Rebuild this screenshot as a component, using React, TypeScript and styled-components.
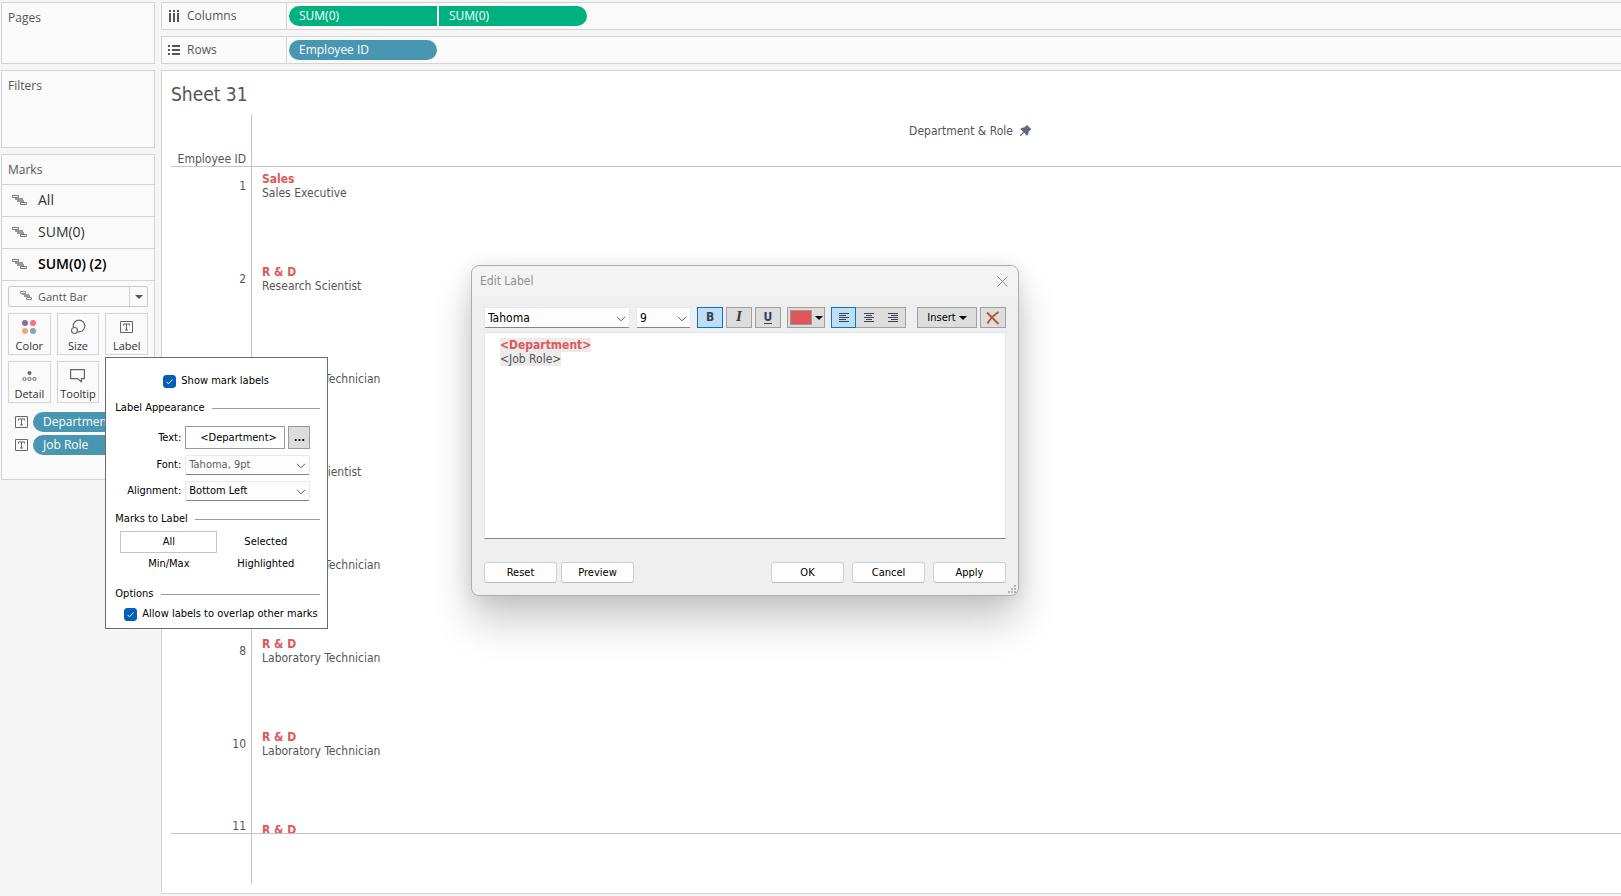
import React from 'react';
import styled, { createGlobalStyle, css } from 'styled-components';
import { AiFillPushpin } from 'react-icons/ai';

const uiFont = '"DejaVu Sans Condensed", Tahoma, sans-serif';
const panelFont = '"Open Sans", "Noto Sans", sans-serif';
const line = '#d4d4d4';
const blue = '#4996b2';
const green = '#00b180';
const red = '#e15759';

const GlobalStyle = createGlobalStyle`
  *, *::before, *::after { box-sizing: border-box; }
  body { margin: 0; background: #f5f5f5; color: #555; font: 12px/14px ${panelFont}; }
  button, input, select { margin: 0; padding: 0; border: 0; background: none; color: inherit; font: inherit; }
  h1, h2, h3, p { margin: 0; font: inherit; }
`;

/* ---------- page frame ---------- */

const Page = styled.div`
  position: relative;
  display: grid;
  grid-template-columns: 154px minmax(0, 1fr);
  grid-template-rows: minmax(0, 1fr);
  gap: 6px;
  height: 100vh;
  padding: 2px 0 2px 1px;
  overflow: hidden;
`;

const Side = styled.aside`
  display: flex;
  flex-direction: column;
  align-items: stretch;
  gap: 6px;
`;

const Main = styled.main`
  display: flex;
  flex-direction: column;
  gap: 6px;
  min-width: 0;
`;

const Card = styled.section<{ $height?: number }>`
  min-height: ${(p) => p.$height ?? 0}px;
  border: 1px solid ${line};
  background: #fafafa;
`;

const CardTitle = styled.h2`
  padding: 8px 6px;
  line-height: 13px;
`;

/* ---------- shelves ---------- */

const Shelf = styled.section`
  display: flex;
  height: 28px;
  flex: none;
  border: 1px solid ${line};
  border-right: 0;
  background: #fafafa;
`;

const ShelfName = styled.h2`
  display: flex;
  align-items: center;
  gap: 7px;
  width: 125px;
  padding-left: 6px;
  border-right: 1px solid ${line};
`;

const Pills = styled.div`
  display: flex;
  align-items: center;
  gap: 2px;
  padding-left: 2px;
`;

type End = 'both' | 'left' | 'right';

const Pill = styled.button<{ $color: string; $round?: End }>`
  width: 148px;
  height: 20px;
  padding-left: 10px;
  background: ${(p) => p.$color};
  color: #fff;
  text-align: left;
  border-radius: ${(p) =>
    p.$round === 'left' ? '10px 0 0 10px' : p.$round === 'right' ? '0 10px 10px 0' : '10px'};
`;

/* ---------- marks card ---------- */

const MarksCard = styled(Card)`
  padding-bottom: 24px;
`;

const MarkTab = styled.button<{ $active?: boolean }>`
  display: flex;
  align-items: center;
  gap: 11px;
  width: 100%;
  height: 32px;
  padding: 0 0 2px 10px;
  border-top: 1px solid ${line};
  color: ${(p) => (p.$active ? '#000' : '#333')};
  font-size: 14px;
  font-weight: ${(p) => (p.$active ? 600 : 400)};
`;

const MarksBody = styled.div`
  padding: 5px 6px 0;
  border-top: 1px solid ${line};
`;

const MarkType = styled.label`
  position: relative;
  display: block;
  height: 21px;
  margin-bottom: 6px;
  border: 1px solid #c8c8c8;
  border-radius: 2px;
  font-size: 11px;

  select {
    width: 100%;
    height: 19px;
    padding-left: 29px;
    appearance: none;
  }
`;

const MarkTypeIcon = styled.span`
  position: absolute;
  left: 11px;
  top: 4px;
  display: flex;
  pointer-events: none;
`;

const MarkTypeArrow = styled.span`
  position: absolute;
  right: 0;
  top: 0;
  display: flex;
  align-items: center;
  justify-content: center;
  width: 18px;
  height: 19px;
  border-left: 1px solid ${line};
  pointer-events: none;
`;

const MarkButtons = styled.div`
  display: grid;
  grid-template-columns: repeat(3, 1fr);
  gap: 6px;
  margin-bottom: 9px;
`;

const MarkSlot = styled.div`
  position: relative;
`;

const MarkButton = styled.button`
  display: flex;
  flex-direction: column;
  align-items: center;
  justify-content: space-between;
  width: 100%;
  height: 42px;
  padding: 5px 0 1px;
  border: 1px solid ${line};
  color: #333;
  font-size: 11px;
  white-space: nowrap;
`;

const MarkPills = styled.ul`
  display: flex;
  flex-direction: column;
  gap: 3px;
  margin: 0;
  padding: 0 0 0 7px;
  list-style: none;

  li {
    display: flex;
    align-items: center;
    gap: 5px;
  }
`;

const MarkPill = styled(Pill)`
  flex: 1;
`;

/* ---------- worksheet ---------- */

const Sheet = styled.section`
  display: flex;
  flex: 1;
  flex-direction: column;
  min-height: 0;
  padding: 11px 0 9px 9px;
  border: 1px solid ${line};
  border-right: 0;
  background: #fff;
  font-family: ${uiFont};
`;

const SheetTitle = styled.h1`
  margin-bottom: 9px;
  font-size: 19px;
  line-height: 24px;
`;

const Viewport = styled.div`
  flex: 1;
  min-height: 0;
  overflow: hidden;
`;

const Table = styled.table`
  width: 100%;
  border-collapse: separate;
  border-spacing: 0;
  table-layout: fixed;

  th, td { padding: 0; font-weight: 400; vertical-align: top; }
`;

const IdHead = styled.th`
  width: 81px;
  height: 52px;
  border-right: 1px solid #c4c4c4;
  border-bottom: 1px solid #c4c4c4;

  && { padding-right: 5px; text-align: right; vertical-align: bottom; }
`;

const RoleHead = styled.th`
  border-bottom: 1px solid #c4c4c4;

  && { padding: 8px 0 0 69px; }

  svg { margin-left: 5px; color: #5f6b7e; vertical-align: -3px; }
`;

const DataRow = styled.tr`
  height: 93px;
`;

const IdCell = styled.th<{ $cut: boolean }>`
  border-right: 1px solid #c4c4c4;

  && { padding: ${(p) => (p.$cut ? 1 : 12)}px 5px 0 0; text-align: right; }
`;

const LabelCell = styled.td`
  && { padding: 5px 0 0 10px; }
`;

const Dept = styled.strong`
  display: block;
  color: ${red};
`;

const Axis = styled.div`
  flex: none;
  height: 51px;
  border-top: 1px solid #c4c4c4;

  &::before {
    content: '';
    display: block;
    width: 81px;
    height: 50px;
    border-right: 1px solid #c4c4c4;
  }
`;

/* ---------- label popup ---------- */

const Popup = styled.section`
  position: absolute;
  z-index: 2;
  left: 0;
  top: 44px;
  width: 223px;
  padding: 16px 7px 7px 9px;
  border: 1px solid #6b6b6b;
  background: #fff;
  color: #000;
  font: 11px/14px ${uiFont};
`;

const Check = styled.label<{ $indent: number }>`
  display: flex;
  align-items: center;
  gap: 5px;
  padding-left: ${(p) => p.$indent}px;
  white-space: nowrap;
`;

const CheckBox = styled.span`
  display: grid;
  width: 13px;
  height: 13px;

  input {
    grid-area: 1 / 1;
    width: 13px;
    height: 13px;
    appearance: none;
    border: 1px solid #777;
    border-radius: 3px;
  }
  input:checked { border-color: #005fb8; background: #005fb8; }
  svg { grid-area: 1 / 1; pointer-events: none; }
`;

const GroupTitle = styled.h3<{ $above: number; $below: number }>`
  display: flex;
  align-items: center;
  gap: 7px;
  margin: ${(p) => p.$above}px 0 ${(p) => p.$below}px;

  &::after { content: ''; flex: 1; height: 1px; background: #9a9a9a; }
`;

const Fields = styled.div`
  display: grid;
  grid-template-columns: 66px 125px;
  gap: 6px 4px;
  align-items: center;

  > label { text-align: right; }
`;

const TextField = styled.div`
  display: flex;
  gap: 3px;

  input {
    width: 100px;
    height: 23px;
    padding-left: 14px;
    border: 1px solid #999;
  }
  button {
    flex: 1;
    border: 1px solid #999;
    background: #ddd;
    font-weight: 700;
  }
`;

const Combo = styled.span<{ $width: number; $height: number; $muted?: boolean; $size?: number }>`
  position: relative;
  display: block;
  width: ${(p) => p.$width}px;
  height: ${(p) => p.$height}px;
  border: 1px solid #e8e8e8;
  border-bottom-color: #868686;
  border-radius: 2px;
  background: #fdfdfd;
  color: ${(p) => (p.$muted ? '#5c5c5c' : '#000')};
  font-size: ${(p) => p.$size ?? 11}px;

  select {
    width: 100%;
    height: 100%;
    padding-left: 3px;
    appearance: none;
  }
  svg { position: absolute; right: 3px; top: 50%; margin-top: -2px; pointer-events: none; }
`;

const Choices = styled.div`
  display: grid;
  grid-template-columns: 97px 97px;
  padding-left: 5px;
`;

const Choice = styled.button`
  height: 22px;
  border: 1px solid transparent;

  &[aria-pressed='true'] { border-color: #c4c4c4; }
`;

/* ---------- edit label dialog ---------- */

const Dialog = styled.section`
  position: absolute;
  z-index: 3;
  left: 471px;
  top: 265px;
  width: 548px;
  border: 1px solid #adadad;
  border-radius: 8px;
  background: #efefef;
  box-shadow: 0 26px 40px rgba(0, 0, 0, 0.2), 0 2px 20px rgba(0, 0, 0, 0.1);
  color: #000;
  font: 11px/14px ${uiFont};
`;

const TitleBar = styled.header`
  display: flex;
  align-items: center;
  justify-content: space-between;
  height: 30px;
  padding: 0 10px 0 8px;
  border-radius: 8px 8px 0 0;
  background: #f3f3f3;
  color: #8f8f8f;
  font-size: 12px;

  button { display: flex; }
`;

const DialogBody = styled.div`
  padding: 11px 12px 12px;
`;

const Tools = styled.div`
  display: flex;
  align-items: center;
  gap: 6px;
  margin-bottom: 4px;
`;

const ToolGroup = styled.div<{ $end?: boolean; $joined?: boolean }>`
  display: flex;
  gap: ${(p) => (p.$joined ? 0 : 3)}px;
  margin-left: ${(p) => (p.$end ? 'auto' : 0)};
`;

const Tool = styled.button<{ $width: number; $mid?: boolean; $last?: boolean }>`
  display: flex;
  align-items: center;
  justify-content: center;
  gap: 3px;
  width: ${(p) => p.$width}px;
  height: 21px;
  border: 1px solid #a0a0a0;
  background: #ddd;
  ${(p) => p.$mid && css`border-left: 0; border-right: 0;`}
  ${(p) => p.$last && css`border-left: 0;`}

  &[aria-pressed='true'] { border-color: #0078d7; background: #c0ddf5; }
`;

const Glyph = styled.span<{ $kind: 'bold' | 'italic' | 'underline' }>`
  color: #35424f;
  font-weight: 700;
  font-size: 12px;
  line-height: 13px;
  ${(p) => p.$kind === 'italic' && css`font-family: "DejaVu Serif", serif; font-style: italic;`}
  ${(p) => p.$kind === 'underline' && css`border-bottom: 1px solid #35424f; line-height: 12px;`}
`;

const Swatch = styled.span`
  width: 22px;
  height: 15px;
  border: 1px solid #999;
  background: ${red};
`;

const Editor = styled.div`
  height: 207px;
  margin-bottom: 23px;
  padding: 5px 15px;
  border: 1px solid #e6e6e6;
  border-bottom-color: #868686;
  background: #fff;
  color: #555;
  font-size: 12px;
  outline: 0;

  strong { color: ${red}; }
  strong, span { background: #ebebeb; }
`;

const Actions = styled.footer`
  display: flex;
  gap: 8px;
`;

const ActionPair = styled.div`
  display: flex;
  gap: 4px;
  margin-right: auto;
`;

const Action = styled.button`
  width: 73px;
  height: 21px;
  border: 1px solid #d0d0d0;
  border-bottom-color: #bababa;
  border-radius: 3px;
  background: #fdfdfd;
`;

const Grip = styled.svg`
  position: absolute;
  right: 2px;
  bottom: 2px;
`;

/* ---------- icons ---------- */

const ColumnsIcon = () => (
  <svg width="12" height="13" viewBox="0 0 12 13" fill="#555" aria-hidden="true">
    <path d="M1 0h2v2H1zM5 0h2v2H5zM9 0h2v2H9zM1 3h2v9H1zM5 3h2v9H5zM9 3h2v9H9z" />
  </svg>
);

const RowsIcon = () => (
  <svg width="12" height="13" viewBox="0 0 12 13" fill="#555" aria-hidden="true">
    <path d="M0 1h2v2H0zM0 5h2v2H0zM0 9h2v2H0zM4 1h8v2H4zM4 5h8v2H4zM4 9h8v2H4z" />
  </svg>
);

const GanttIcon = () => (
  <svg width="15" height="10" viewBox="0 0 15 10" aria-hidden="true">
    <path d="M.5.5h6v2h-6zM8.500 7.500h6v2h-6z" fill="#fafafa" stroke="#777" />
    <path d="M3 3h8v2H3zM5 5h7v2H5z" fill="#999" />
  </svg>
);

const SmallGanttIcon = () => (
  <svg width="12" height="9" viewBox="0 0 12 9" aria-hidden="true">
    <path d="M.5.5h5v2h-5zM6.500 6.500h5v2h-5z" fill="#fafafa" stroke="#888" />
    <path d="M2 3h7v1H2zM4 4h6v2H4z" fill="#999" />
  </svg>
);

const ColorIcon = () => (
  <svg width="16" height="16" viewBox="0 0 16 16" aria-hidden="true">
    <circle cx="4" cy="4" r="3" fill="#8a6f9e" />
    <circle cx="12" cy="4" r="3" fill="#fb7080" />
    <circle cx="4" cy="12" r="3" fill="#f7a77d" />
    <circle cx="12" cy="12" r="3" fill="#7ea3cf" />
  </svg>
);

const SizeIcon = () => (
  <svg width="16" height="16" viewBox="0 0 16 16" fill="#fafafa" stroke="#666" strokeWidth="1.200" aria-hidden="true">
    <circle cx="9" cy="7" r="5.800" />
    <circle cx="4.500" cy="11.500" r="3" />
  </svg>
);

const textMark = 'M.5.5h12v11H.5zM3.500 4.500v-1.500h6v1.500M6.500 3v6M5 9h3';

const TextIcon = () => (
  <svg width="13" height="12" viewBox="0 0 13 12" fill="none" stroke="#666" aria-hidden="true">
    <path d={textMark} />
  </svg>
);

const LabelIcon = () => (
  <svg width="13" height="16" viewBox="0 -2 13 16" fill="none" stroke="#666" aria-hidden="true">
    <path d={textMark} />
  </svg>
);

const DetailIcon = () => (
  <svg width="15" height="16" viewBox="0 0 15 16" fill="none" stroke="#666" aria-hidden="true">
    <circle cx="7.500" cy="6" r="2" fill="#666" stroke="none" />
    <circle cx="2.500" cy="12" r="1.600" />
    <circle cx="7.500" cy="12" r="1.600" />
    <circle cx="12.500" cy="12" r="1.600" />
  </svg>
);

const TooltipIcon = () => (
  <svg width="15" height="16" viewBox="0 0 15 16" fill="none" stroke="#666" strokeWidth="1.200" aria-hidden="true">
    <path d="M.6 2.600h13.800v9h-3v3.200l-4-3.200H.6z" />
  </svg>
);

const Chevron = () => (
  <svg width="10" height="6" viewBox="0 0 10 6" fill="none" stroke="#555" aria-hidden="true">
    <path d="M1 .8 5 4.800 9 .8" />
  </svg>
);

const Caret = ({ color = '#000' }: { color?: string }) => (
  <svg width="8" height="4" viewBox="0 0 8 4" fill={color} aria-hidden="true">
    <path d="M0 0h8L4 4z" />
  </svg>
);

const Tick = () => (
  <svg width="13" height="13" viewBox="0 0 13 13" fill="none" stroke="#fff" aria-hidden="true">
    <path d="m3.500 6.800 2 2 4-4.300" />
  </svg>
);

const alignPaths = {
  left: 'M0 .5h10M0 2.500h7M0 4.500h10M0 6.500h7M0 8.500h10',
  center: 'M0 .5h10M2 2.500h6M0 4.500h10M2 6.500h6M0 8.500h10',
  right: 'M0 .5h10M3 2.500h7M0 4.500h10M3 6.500h7M0 8.500h10',
};

const AlignIcon = ({ to }: { to: keyof typeof alignPaths }) => (
  <svg width="10" height="9" viewBox="0 0 10 9" stroke="#35424f" aria-hidden="true">
    <path d={alignPaths[to]} />
  </svg>
);

const ClearIcon = () => (
  <svg width="14" height="14" viewBox="0 0 14 14" fill="none" stroke="#b9532f" aria-hidden="true">
    <path d="M1 1.500 12.500 13" strokeWidth="1.800" />
    <path d="M12.500 1C8 4 4 8 1.500 12.500" strokeWidth="1.800" />
  </svg>
);

const CloseIcon = () => (
  <svg width="11" height="11" viewBox="0 0 11 11" stroke="#8a8a8a" aria-hidden="true">
    <path d="m.5.5 10 10M10.500.5l-10 10" />
  </svg>
);

/* ---------- data ---------- */

const employees = [
  { id: 1, dept: 'Sales', role: 'Sales Executive' },
  { id: 2, dept: 'R & D', role: 'Research Scientist' },
  { id: 4, dept: 'R & D', role: 'Laboratory Technician' },
  { id: 5, dept: 'R & D', role: 'Research Scientist' },
  { id: 7, dept: 'R & D', role: 'Laboratory Technician' },
  { id: 8, dept: 'R & D', role: 'Laboratory Technician' },
  { id: 10, dept: 'R & D', role: 'Laboratory Technician' },
  { id: 11, dept: 'R & D', role: 'Laboratory Technician' },
];

/* ---------- parts ---------- */

const CheckOption = ({ text, indent }: { text: string; indent: number }) => (
  <Check $indent={indent}>
    <CheckBox>
      <input type="checkbox" defaultChecked />
      <Tick />
    </CheckBox>
    {text}
  </Check>
);

const LabelPopup = () => (
  <Popup aria-label="Label">
    <CheckOption text="Show mark labels" indent={48} />
    <GroupTitle $above={13} $below={11}>Label Appearance</GroupTitle>
    <Fields>
      <label htmlFor="label-text">Text:</label>
      <TextField>
        <input id="label-text" readOnly value="<Department>" />
        <button type="button" aria-label="Edit text">...</button>
      </TextField>
      <label htmlFor="label-font">Font:</label>
      <Combo $width={125} $height={20} $muted>
        <select id="label-font"><option>Tahoma, 9pt</option></select>
        <Chevron />
      </Combo>
      <label htmlFor="label-align">Alignment:</label>
      <Combo $width={125} $height={20}>
        <select id="label-align"><option>Bottom Left</option></select>
        <Chevron />
      </Combo>
    </Fields>
    <GroupTitle $above={11} $below={5}>Marks to Label</GroupTitle>
    <Choices>
      <Choice type="button" aria-pressed="true">All</Choice>
      <Choice type="button">Selected</Choice>
      <Choice type="button">Min/Max</Choice>
      <Choice type="button">Highlighted</Choice>
    </Choices>
    <GroupTitle $above={12} $below={6}>Options</GroupTitle>
    <CheckOption text="Allow labels to overlap other marks" indent={9} />
  </Popup>
);

const EditLabelDialog = () => (
  <Dialog role="dialog" aria-labelledby="edit-label-title">
    <TitleBar>
      <h2 id="edit-label-title">Edit Label</h2>
      <button type="button" aria-label="Close"><CloseIcon /></button>
    </TitleBar>
    <DialogBody>
      <Tools>
        <Combo $width={146} $height={21} $size={12}>
          <select aria-label="Font"><option>Tahoma</option></select>
          <Chevron />
        </Combo>
        <Combo $width={55} $height={21} $size={12}>
          <select aria-label="Size"><option>9</option></select>
          <Chevron />
        </Combo>
        <ToolGroup>
          <Tool type="button" $width={26} aria-pressed="true"><Glyph $kind="bold">B</Glyph></Tool>
          <Tool type="button" $width={26}><Glyph $kind="italic">I</Glyph></Tool>
          <Tool type="button" $width={26}><Glyph $kind="underline">U</Glyph></Tool>
        </ToolGroup>
        <Tool type="button" $width={38} aria-label="Text color"><Swatch /><Caret /></Tool>
        <ToolGroup $joined>
          <Tool type="button" $width={25} aria-pressed="true" aria-label="Align left"><AlignIcon to="left" /></Tool>
          <Tool type="button" $width={25} $mid aria-label="Align center"><AlignIcon to="center" /></Tool>
          <Tool type="button" $width={25} $last aria-label="Align right"><AlignIcon to="right" /></Tool>
        </ToolGroup>
        <ToolGroup $end>
          <Tool type="button" $width={60}>Insert<Caret /></Tool>
          <Tool type="button" $width={26} aria-label="Clear"><ClearIcon /></Tool>
        </ToolGroup>
      </Tools>
      <Editor contentEditable suppressContentEditableWarning role="textbox" aria-label="Label text">
        <div><strong>&lt;Department&gt;</strong></div>
        <div><span>&lt;Job Role&gt;</span></div>
      </Editor>
      <Actions>
        <ActionPair>
          <Action type="button">Reset</Action>
          <Action type="button">Preview</Action>
        </ActionPair>
        <Action type="button">OK</Action>
        <Action type="button">Cancel</Action>
        <Action type="button">Apply</Action>
      </Actions>
    </DialogBody>
    <Grip width="8" height="8" viewBox="0 0 8 8" fill="#b5b5b5" aria-hidden="true">
      <path d="M6 0h2v2H6zM3 3h2v2H3zM6 3h2v2H6zM0 6h2v2H0zM3 6h2v2H3zM6 6h2v2H6z" />
    </Grip>
  </Dialog>
);

const Marks = () => (
  <MarksCard>
    <CardTitle>Marks</CardTitle>
    <MarkTab type="button"><GanttIcon />All</MarkTab>
    <MarkTab type="button"><GanttIcon />SUM(0)</MarkTab>
    <MarkTab type="button" $active><GanttIcon />SUM(0) (2)</MarkTab>
    <MarksBody>
      <MarkType>
        <select aria-label="Mark type"><option>Gantt Bar</option></select>
        <MarkTypeIcon><SmallGanttIcon /></MarkTypeIcon>
        <MarkTypeArrow><Caret color="#555" /></MarkTypeArrow>
      </MarkType>
      <MarkButtons>
        <MarkButton type="button"><ColorIcon />Color</MarkButton>
        <MarkButton type="button"><SizeIcon />Size</MarkButton>
        <MarkSlot>
          <MarkButton type="button"><LabelIcon />Label</MarkButton>
          <LabelPopup />
        </MarkSlot>
        <MarkButton type="button"><DetailIcon />Detail</MarkButton>
        <MarkButton type="button"><TooltipIcon />Tooltip</MarkButton>
      </MarkButtons>
      <MarkPills>
        <li><TextIcon /><MarkPill type="button" $color={blue}>Department</MarkPill></li>
        <li><TextIcon /><MarkPill type="button" $color={blue}>Job Role</MarkPill></li>
      </MarkPills>
    </MarksBody>
  </MarksCard>
);

const Worksheet = () => (
  <Sheet>
    <SheetTitle>Sheet 31</SheetTitle>
    <Viewport>
      <Table>
        <thead>
          <tr>
            <IdHead scope="col">Employee ID</IdHead>
            <RoleHead scope="col">Department &amp; Role<AiFillPushpin size={15} /></RoleHead>
          </tr>
        </thead>
        <tbody>
          {employees.map((e, i) => (
            <DataRow key={e.id}>
              <IdCell scope="row" $cut={i === employees.length - 1}>{e.id}</IdCell>
              <LabelCell><Dept>{e.dept}</Dept>{e.role}</LabelCell>
            </DataRow>
          ))}
        </tbody>
      </Table>
    </Viewport>
    <Axis />
  </Sheet>
);

export default function App() {
  return (
    <Page>
      <GlobalStyle />
      <Side>
        <Card $height={62}><CardTitle>Pages</CardTitle></Card>
        <Card $height={78}><CardTitle>Filters</CardTitle></Card>
        <Marks />
      </Side>
      <Main>
        <Shelf>
          <ShelfName><ColumnsIcon />Columns</ShelfName>
          <Pills>
            <Pill type="button" $color={green} $round="left">SUM(0)</Pill>
            <Pill type="button" $color={green} $round="right">SUM(0)</Pill>
          </Pills>
        </Shelf>
        <Shelf>
          <ShelfName><RowsIcon />Rows</ShelfName>
          <Pills>
            <Pill type="button" $color={blue}>Employee ID</Pill>
          </Pills>
        </Shelf>
        <Worksheet />
      </Main>
      <EditLabelDialog />
    </Page>
  );
}
